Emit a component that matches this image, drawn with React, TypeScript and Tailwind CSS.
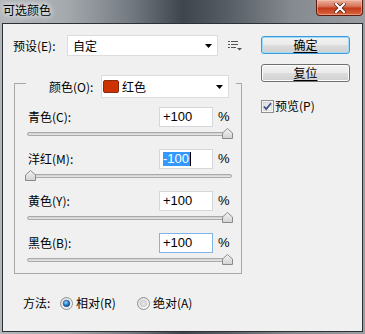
import React from "react";

const F = "font-['Noto_Sans_CJK_SC',sans-serif]";
const NUM = "font-['Liberation_Sans',sans-serif]";

function ComboArrow() {
  return (
    <svg width="7" height="4" viewBox="0 0 7 4">
      <path d="M0 0H7L3.5 4Z" fill="#000" />
    </svg>
  );
}

function MenuIcon() {
  return (
    <svg width="14" height="10" viewBox="0 0 14 10" shapeRendering="crispEdges">
      <rect x="0" y="0" width="2" height="1" fill="#555" />
      <rect x="3" y="0" width="7" height="1" fill="#555" />
      <rect x="0" y="3" width="2" height="1" fill="#555" />
      <rect x="3" y="3" width="7" height="1" fill="#555" />
      <rect x="0" y="6" width="2" height="1" fill="#555" />
      <rect x="3" y="6" width="5" height="1" fill="#555" />
      <path d="M9 7H14L11.5 9.5Z" fill="#555" shapeRendering="auto" />
    </svg>
  );
}

function Thumb() {
  return (
    <svg width="11" height="11" viewBox="0 0 11 11">
      <defs>
        <linearGradient id="thg" x1="0" y1="0" x2="0" y2="1">
          <stop offset="0" stopColor="#f4f4f4" />
          <stop offset="1" stopColor="#d2d2d2" />
        </linearGradient>
      </defs>
      <path d="M5.5 0.5 L10.5 5 V10.5 H0.5 V5 Z" fill="url(#thg)" stroke="#8a8a8a" />
    </svg>
  );
}

function Checkbox() {
  return (
    <svg width="13" height="13" viewBox="0 0 13 13">
      <defs>
        <linearGradient id="cbg" x1="0" y1="0" x2="1" y2="1">
          <stop offset="0" stopColor="#dcdcdc" />
          <stop offset="1" stopColor="#fbfbfb" />
        </linearGradient>
      </defs>
      <rect x="0.5" y="0.5" width="12" height="12" fill="#f4f4f4" stroke="#8e8f8f" />
      <rect x="2.5" y="2.5" width="8" height="8" fill="url(#cbg)" stroke="#c8c8c8" strokeWidth="0.5" />
      <path d="M3 6.5 L5.2 9 L10 3.2" fill="none" stroke="#3b5184" strokeWidth="1.8" />
    </svg>
  );
}

function Radio({ on }: { on: boolean }) {
  return (
    <svg width="13" height="13" viewBox="0 0 13 13">
      <defs>
        <linearGradient id="rbo" x1="0" y1="0" x2="1" y2="1">
          <stop offset="0" stopColor="#dadada" />
          <stop offset="1" stopColor="#fbfbfb" />
        </linearGradient>
        <radialGradient id="rbd" cx="0.4" cy="0.35" r="0.7">
          <stop offset="0" stopColor="#9fd6ff" />
          <stop offset="0.5" stopColor="#2a86d0" />
          <stop offset="1" stopColor="#0d3f7a" />
        </radialGradient>
        <radialGradient id="rbu" cx="0.5" cy="0.5" r="0.6">
          <stop offset="0" stopColor="#e8e8e8" />
          <stop offset="1" stopColor="#c6c6c6" />
        </radialGradient>
      </defs>
      <circle cx="6.5" cy="6.5" r="6" fill="url(#rbo)" stroke="#8e8f8f" />
      {on ? (
        <circle cx="6.5" cy="6.5" r="3.3" fill="url(#rbd)" stroke="#1c4f86" strokeWidth="0.6" />
      ) : (
        <circle cx="6.5" cy="6.5" r="3.6" fill="url(#rbu)" />
      )}
    </svg>
  );
}

type Row = {
  label: string;
  key: string;
  value: string;
  right: boolean;
  selected?: boolean;
  focus?: boolean;
};

const rows: Row[] = [
  { label: "青色", key: "C", value: "+100", right: true },
  { label: "洋红", key: "M", value: "-100", right: false, selected: true },
  { label: "黄色", key: "Y", value: "+100", right: true },
  { label: "黑色", key: "B", value: "+100", right: true, focus: true },
];

function SliderRow({ r }: { r: Row }) {
  return (
    <div className="flex flex-col">
      <div className="h-[20px] flex items-center pl-[13px]">
        <div className="w-[131px] text-[12px] leading-[16px] text-black">
          {r.label}({r.key}):
        </div>
        <div
          className={`w-[54px] h-[20px] bg-white border flex items-center pl-[3px] ${NUM} text-[13px] leading-[14px] text-black ${
            r.focus ? "border-[#7eb4ea]" : "border-[#d4d7dc]"
          }`}
        >
          {r.selected ? (
            <>
              <span className="bg-[#3399ff] text-white h-[14px] flex items-center pr-[1px]">{r.value}</span>
              <span className="w-[1px] h-[14px] bg-black" />
            </>
          ) : (
            <span>{r.value}</span>
          )}
        </div>
        <div className={`ml-[5px] ${NUM} text-[13px] leading-[14px] text-black`}>%</div>
      </div>
      <div className="relative h-[12px] ml-[12px] w-[205px]">
        <div className="absolute left-0 right-0 top-[5px] h-[4px] rounded-[2px] border border-[#a9a9a9] bg-[linear-gradient(180deg,#cfcfcf,#e9e9e9)]" />
        <div className={`absolute top-[1px] ${r.right ? "left-[195px]" : "left-[-2px]"}`}>
          <Thumb />
        </div>
      </div>
    </div>
  );
}

function Button({ label, def }: { label: string; def?: boolean }) {
  return (
    <div
      className={`w-[89px] h-[18px] rounded-[3px] border flex items-center justify-center text-[12px] leading-[14px] text-black bg-[linear-gradient(180deg,#f2f2f2_0%,#ebebeb_48%,#dddddd_52%,#cfcfcf_100%)] ${
        def ? "border-[#3c9bdc] shadow-[inset_0_0_0_1px_#9fdcfb]" : "border-[#707070] shadow-[inset_0_0_0_1px_#fcfcfc]"
      }`}
    >
      <span className="underline underline-offset-[2px]">{label}</span>
    </div>
  );
}

export default function App() {
  return (
    <div
      className={`w-[365px] h-[334px] flex flex-col overflow-hidden bg-[linear-gradient(90deg,#b3b7bb_0%,#a5aaaf_18%,#737980_36%,#3e454d_50%,#555c63_62%,#858a90_80%,#9a9ea3_100%)] ${F}`}
    >
      <div className="h-[23px] shrink-0 flex items-start justify-between">
        <div className="pl-[3px] pt-[2px] text-[12px] leading-[16px] text-black [text-shadow:0_0_5px_#ffffff,0_0_8px_#ffffff]">
          可选颜色
        </div>
        <div className="mr-[2px] w-[47px] h-[16px] rounded-b-[4px] border border-t-0 border-[#5e1c10] bg-[linear-gradient(180deg,#eab3a2_0%,#d8745a_42%,#c23a1a_55%,#d9663f_100%)] flex items-center justify-center shadow-[inset_0_0_0_1px_rgba(255,200,180,0.5)]">
          <svg width="12" height="10" viewBox="0 0 12 10">
            <path d="M2 1 L10 9 M10 1 L2 9" stroke="#4a1a10" strokeWidth="3.6" strokeLinecap="square" />
            <path d="M2 1 L10 9 M10 1 L2 9" stroke="#ffffff" strokeWidth="2.2" strokeLinecap="square" />
          </svg>
        </div>
      </div>

      <div className="mx-[2px] mb-[2px] flex-1 border border-[#2c3136] bg-[#f0f0f0] flex">
        <div className="w-[239px] flex flex-col">
          <div className="mt-[11px] h-[21px] flex items-center pl-[10px]">
            <div className="w-[54px] text-[12px] leading-[16px] text-black">预设(E):</div>
            <div className="w-[151px] h-[21px] bg-white border border-[#dcdcdc] flex items-center justify-between pl-[5px] pr-[5px]">
              <span className="text-[12px] leading-[16px] text-black">自定</span>
              <ComboArrow />
            </div>
            <div className="ml-[10px] mt-[1px]">
              <MenuIcon />
            </div>
          </div>

          <div className="ml-[11px] w-[228px] mt-[27px] border border-[#a7a7a7] pb-[8px] flex flex-col">
            <div className="-mt-[9px] ml-[11px] w-[210px] h-[23px] bg-[#f0f0f0] flex items-center">
              <div className="pl-[23px] w-[75px] text-[12px] leading-[16px] text-black whitespace-nowrap">颜色(O):</div>
              <div className="w-[128px] h-[23px] bg-white border border-[#dcdcdc] flex items-center pl-[1px] pr-[5px]">
                <div className="w-[16px] h-[13px] rounded-[2px] bg-[#cc3300] border border-[#8a2a10]" />
                <span className="ml-[3px] text-[12px] leading-[16px] text-black">红色</span>
                <div className="ml-auto">
                  <ComboArrow />
                </div>
              </div>
            </div>
            <div className="mt-[9px] flex flex-col gap-[10px]">
              {rows.map((r) => (
                <SliderRow key={r.key} r={r} />
              ))}
            </div>
          </div>

          <div className="mt-[21px] h-[16px] flex items-center pl-[20px] text-[12px] leading-[16px] text-black">
            <div className="w-[37px]">方法:</div>
            <Radio on={true} />
            <div className="ml-[3px] w-[61px]">相对(R)</div>
            <Radio on={false} />
            <div className="ml-[3px]">绝对(A)</div>
          </div>
        </div>

        <div className="flex-1 flex flex-col pl-[19px] pt-[12px]">
          <Button label="确定" def />
          <div className="mt-[10px]">
            <Button label="复位" />
          </div>
          <div className="mt-[16px] flex items-center">
            <Checkbox />
            <span className="ml-[1px] text-[12px] leading-[16px] text-black">预览(P)</span>
          </div>
        </div>
      </div>
    </div>
  );
}
